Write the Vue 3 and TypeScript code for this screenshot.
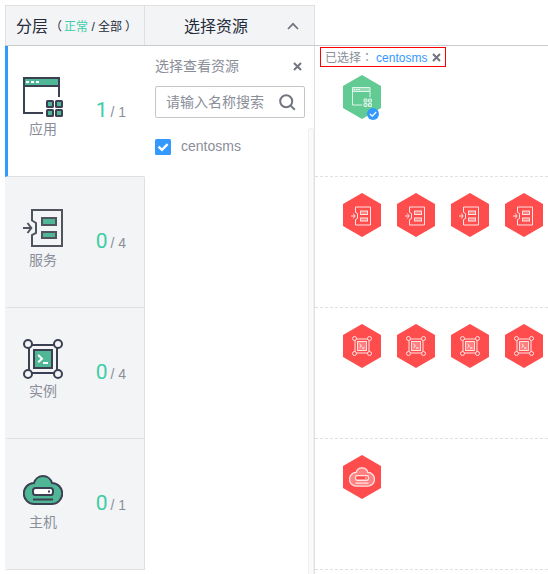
<script setup lang="ts">
import { ref } from 'vue'

type IconName = 'app' | 'service' | 'instance' | 'host'

interface Layer {
  icon: IconName
  label: string
  normal: number
  total: number
}

const layers: Layer[] = [
  { icon: 'app', label: '应用', normal: 1, total: 1 },
  { icon: 'service', label: '服务', normal: 0, total: 4 },
  { icon: 'instance', label: '实例', normal: 0, total: 4 },
  { icon: 'host', label: '主机', normal: 0, total: 1 },
]

const active = ref<IconName>('app')
const selected = ref('centosms')
</script>

<template>
  <svg class="sprite" aria-hidden="true">
    <symbol id="icon-app" viewBox="0 0 40 40">
      <path class="tint" d="M1 1H36V9H1Z" />
      <path class="line" d="M36 20V1H1V36H20M1 9H36" />
      <path class="detail" d="M3 5H6M8 5H11M13 5H16" />
      <g class="both">
        <rect x="24" y="24" width="6" height="6" rx=".6" />
        <rect x="33" y="24" width="6" height="6" rx=".6" />
        <rect x="24" y="33" width="6" height="6" rx=".6" />
        <rect x="33" y="33" width="6" height="6" rx=".6" />
      </g>
    </symbol>
    <symbol id="icon-service" viewBox="0 0 40 40">
      <path class="line" d="M9 13V2H39V38H9V27L13 25V15L9 12.5M0 20H8M4.5 15L8.3 20L4.5 25" />
      <rect class="both" x="19" y="10" width="14" height="7" />
      <rect class="both" x="19" y="24" width="14" height="6" />
    </symbol>
    <symbol id="icon-instance" viewBox="0 0 40 40">
      <rect class="line" x="6" y="6" width="28" height="28" />
      <g class="knob">
        <circle cx="5" cy="5" r="4" />
        <circle cx="35" cy="5" r="4" />
        <circle cx="5" cy="35" r="4" />
        <circle cx="35" cy="35" r="4" />
      </g>
      <rect class="both" x="11" y="11" width="18" height="18" />
      <path class="detail" d="M15.2 16L19 19.7L15.2 23.3M20 24H25" />
    </symbol>
    <symbol id="icon-host" viewBox="0 0 40 40">
      <path class="both" d="M11.5 34A10.5 10.5 0 1 1 11 13A9.3 9.3 0 0 1 29 13A10.5 10.5 0 1 1 28.5 34Z" />
      <rect class="slot" x="10" y="18" width="20" height="7" rx="2.6" />
      <path class="line" d="M25 21.5H27M10 29.5H30" />
    </symbol>
  </svg>

  <div class="board">
    <header class="head">
      <div class="head-cell layer-head">
        <span class="title">分层</span>
        <span class="legend"><i class="open">（</i><em>正常</em><b>/</b>全部<i class="close">）</i></span>
      </div>
      <div class="head-cell picker-head">
        <span class="title">选择资源</span>
        <svg class="chevron" viewBox="0 0 12 8"><path d="M1 7L6 1.8L11 7" /></svg>
      </div>
    </header>

    <div class="body">
      <nav class="layers">
        <div
          v-for="layer in layers"
          :key="layer.icon"
          class="layer"
          :class="[layer.icon, { active: active === layer.icon }]"
          @click="active = layer.icon"
        >
          <div class="badge">
            <svg class="layer-icon"><use :href="`#icon-${layer.icon}`" /></svg>
            <span>{{ layer.label }}</span>
          </div>
          <div class="count"><strong>{{ layer.normal }}</strong> / {{ layer.total }}</div>
        </div>
      </nav>

      <section class="picker">
        <div class="picker-title">
          <span>选择查看资源</span>
          <svg class="cross" viewBox="0 0 9 9"><path d="M1 1L8 8M8 1L1 8" /></svg>
        </div>
        <div class="search">
          <span>请输入名称搜索</span>
          <svg class="lens" viewBox="0 0 17 17"><circle cx="7.2" cy="7.2" r="6" /><path d="M11.4 11.4L15.8 15.8" /></svg>
        </div>
        <div class="list">
          <div class="option">
            <svg class="check" viewBox="0 0 16 16"><rect width="16" height="16" rx="1.5" /><path d="M3.6 7.6L7 10.8L12.6 5.2" /></svg>
            <span>{{ selected }}</span>
          </div>
          <div class="track"></div>
        </div>
      </section>

      <main class="map">
        <div v-for="layer in layers" :key="layer.icon" class="lane" :class="layer.icon">
          <div v-if="layer.icon === 'app'" class="tag">
            <span>已选择<i class="colon">：</i></span><a>{{ selected }}</a>
            <svg class="cross small" viewBox="0 0 9 9"><path d="M1 1L8 8M8 1L1 8" /></svg>
          </div>
          <div class="nodes">
            <div v-for="n in layer.total" :key="n" class="node" :class="{ ok: n <= layer.normal }">
              <div class="hex">
                <svg class="node-icon"><use :href="`#icon-${layer.icon}`" /></svg>
              </div>
              <svg v-if="layer.icon === 'app'" class="tick" viewBox="0 0 12 12"><circle cx="6" cy="6" r="6" /><path d="M3 6L5.3 8.2L9.2 4" /></svg>
            </div>
          </div>
        </div>
      </main>
    </div>
  </div>
</template>

<style>
body {
  background: #fff;
  overflow: hidden;
}
</style>

<style scoped>
.board {
  box-sizing: border-box;
  width: 548px;
  height: 574px;
  padding: 5px 0 0 5px;
  overflow: hidden;
  display: flex;
  flex-direction: column;
  font: 14px/20px "Liberation Sans", "Noto Sans CJK SC", sans-serif;
  color: #8a8e99;
}
.sprite { position: absolute; width: 0; height: 0; }
svg { display: block; flex: none; }

.line, .both, .knob, .slot, .detail { stroke: var(--ink); stroke-width: 2; }
.line, .detail { fill: none; }
.tint, .both { fill: var(--tint); }
.knob { fill: var(--ground); }
.slot { fill: var(--slot); }
.detail { stroke: var(--mark); }

.head { display: flex; height: 40px; border-bottom: 1px solid #c9cacc; }
.head-cell {
  box-sizing: border-box;
  display: flex;
  align-items: center;
  background: #f3f4f6;
  border-top: 1px solid #dfe0e2;
  border-right: 1px solid #dfe0e2;
  color: #252b3a;
}
.title { font-size: 16px; }
.layer-head { width: 140px; padding: 3px 0 0 10px; border-left: 1px solid #dfe0e2; }
.legend { display: flex; font-size: 12px; margin-left: 4px; }
.legend em { color: #3dcca6; font-style: normal; }
.legend b { font-weight: 400; width: 10px; text-align: center; }
.legend i { font-style: normal; }
.legend .open { margin: 0 2px 0 -2px; }
.legend .close { margin-left: 3px; }
.picker-head { width: 170px; padding: 0 15px 0 39px; justify-content: space-between; }
.picker-head .title { padding-top: 3px; }
.chevron { width: 12px; height: 8px; }
.chevron path { fill: none; stroke: #71757f; stroke-width: 1.8; }

.body { display: flex; flex: 1; min-height: 0; }
.layers { width: 140px; flex: none; }
.layer {
  --ink: #3c4053;
  --tint: #50b796;
  --mark: #fff;
  --slot: #fff;
  --ground: #f3f4f6;
  box-sizing: border-box;
  display: flex;
  justify-content: space-between;
  height: 131px;
  padding: 30px 18px 0 15px;
  background: #f3f4f6;
  border-right: 1px solid #dfe0e2;
  border-bottom: 1px solid #dfe0e2;
  border-left: 3px solid #f3f4f6;
}
.layer.service { --ink: #51535e; }
.layer.active { background: #fff; border-left-color: #3399ff; border-right-color: #fff; --ground: #fff; }
.badge { display: flex; flex-direction: column; align-items: center; padding-top: 1px; }
.layer-icon { width: 40px; height: 40px; }
.badge span { line-height: 20px; margin-top: 2px; }
.count { padding-top: 23px; line-height: 26px; }
.count strong { margin-right: -1px; font-family: Roboto, sans-serif; font-size: 21px; line-height: 20px; font-weight: 400; color: #3dcca6; }

.picker {
  box-sizing: border-box;
  width: 170px;
  flex: none;
  padding: 10px 0 0 10px;
  border-right: 1px solid #dfe0e2;
  display: flex;
  flex-direction: column;
}
.picker-title { display: flex; justify-content: space-between; align-items: center; padding-right: 12px; height: 20px; }
.cross { width: 9px; height: 9px; }
.cross path { fill: none; stroke: #71757f; stroke-width: 2; }
.search {
  box-sizing: border-box;
  width: 150px;
  height: 32px;
  margin-top: 10px;
  padding: 0 8px 0 10px;
  display: flex;
  justify-content: space-between;
  align-items: center;
  border: 1px solid #c4c6ca;
  border-radius: 2px;
}
.lens { width: 17px; height: 17px; }
.lens circle, .lens path { fill: none; stroke: #71757f; stroke-width: 2; }
.list { display: flex; flex: 1; justify-content: space-between; margin-top: 10px; }
.option { display: flex; align-items: center; gap: 10px; height: 38px; }
.option span { padding-bottom: 2px; }
.check { width: 16px; height: 16px; }
.check rect { fill: #3399ff; }
.check path { fill: none; stroke: #fff; stroke-width: 2.4; }
.track {
  box-sizing: border-box;
  width: 6px;
  border-radius: 3px 3px 0 0;
  background: #fafafa;
  border: 1px solid #f0f0f0;
  border-bottom: 0;
}

.map { flex: 1; min-width: 0; }
.lane {
  box-sizing: border-box;
  height: 131px;
  padding-top: 16px;
  border-bottom: 1px dashed #dfe0e2;
  overflow: hidden;
}
.lane.app { padding-top: 1px; }
.tag {
  box-sizing: border-box;
  display: flex;
  align-items: center;
  width: 126px;
  height: 20px;
  margin: 0 0 8px 5px;
  padding: 1px 4px 0 4px;
  border: 1px solid #f00;
  font-size: 12px;
}
.tag a { color: #3399ff; margin-left: 3px; }
.colon { font-family: "Noto Sans CJK TC", sans-serif; font-style: normal; }
.small { margin-left: auto; }
.nodes { display: flex; gap: 16px; padding-left: 28px; width: 240px; }
.node { position: relative; width: 38px; height: 44px; }
.hex {
  --ink: #ffe4e4;
  --tint: #ff8282;
  --mark: #fff;
  --slot: #ff4d4d;
  --ground: #ff4d4d;
  display: flex;
  align-items: center;
  justify-content: center;
  width: 38px;
  height: 44px;
  background: #ff4d4d;
  clip-path: polygon(50% 0, 100% 25%, 100% 75%, 50% 100%, 0 75%, 0 25%);
}
.ok .hex { background: #62ca93; --ink: #e1f6eb; --tint: #91dab3; --ground: #62ca93; }
.node-icon { width: 20px; height: 20px; }
.service .node-icon { margin: 2px 2px 0 0; }
.host .node-icon { width: 26px; height: 26px; }
.tick { position: absolute; right: 2px; bottom: -1px; width: 12px; height: 12px; }
.tick circle { fill: #3399ff; }
.tick path { fill: none; stroke: #fff; stroke-width: 1.2; }
</style>
